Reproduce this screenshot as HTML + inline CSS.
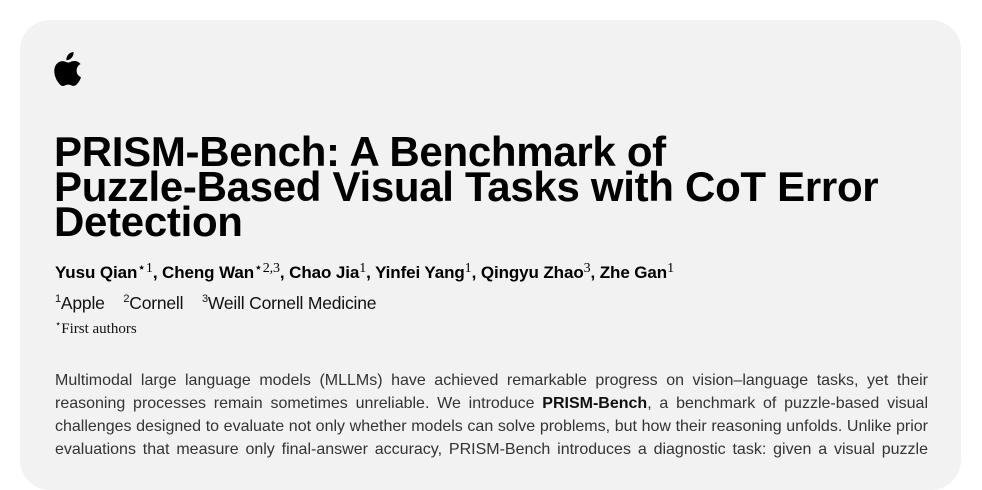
<!DOCTYPE html>
<html><head><meta charset="utf-8"><style>
html,body{margin:0;padding:0;background:#fff;width:982px;height:456px;overflow:hidden}
.card{position:absolute;left:20px;top:20px;width:941px;height:470px;background:#f2f2f2;border-radius:30px}
.logo{position:absolute;left:53px;top:52px}
h1{position:absolute;left:54px;top:134px;margin:0;font:bold 42px/35px "Liberation Sans",sans-serif;letter-spacing:-0.3px;color:#000;width:920px}
.auth{position:absolute;left:55px;top:260px;font:bold 17px "Liberation Sans",sans-serif;color:#000;letter-spacing:-0.1px}
.auth sup{font:14px "Liberation Serif",serif;vertical-align:6px}
.aff{position:absolute;left:55px;top:293px;font:17.5px "Liberation Sans",sans-serif;color:#111;letter-spacing:-0.2px}
.aff sup{font:11px "Liberation Sans",sans-serif;vertical-align:7px}
.first{position:absolute;left:55px;top:319px;font:15px "Liberation Serif",serif;color:#111}
.first sup{font-size:10px}
.body{position:absolute;left:55px;top:369px;width:873px;font:16px/23px "Liberation Sans",sans-serif;color:#333}
.body div{text-align:justify;text-align-last:justify;white-space:nowrap}
</style></head><body>
<div class="card"></div>
<svg class="logo" width="30" height="36" viewBox="0 0 30 36"><path d="M20.5 0c.3 2.2-.6 4.3-1.9 5.8-1.3 1.5-3.2 2.5-5.2 2.4-.3-2.1.7-4.3 1.9-5.7C16.6 1 18.7.1 20.5 0zM27.2 12.3c-.2.1-3.6 2.1-3.6 6.3 0 4.9 4.3 6.6 4.4 6.6 0 .1-.7 2.4-2.3 4.7-1.4 2-2.8 4-5 4-2.2 0-2.9-1.3-5.4-1.3-2.5 0-3.3 1.3-5.3 1.4-2.1.1-3.8-2.2-5.2-4.2C2 26-.3 18.5 2.7 13.3c1.5-2.6 4.2-4.2 7-4.2 2.2 0 4.2 1.5 5.5 1.5 1.3 0 3.8-1.8 6.4-1.6 1.1 0 4.1.4 6.1 3.3z" fill="#000"/></svg>
<h1>PRISM-Bench: A Benchmark of<br>Puzzle-Based Visual Tasks with CoT Error<br>Detection</h1>
<div class="auth">Yusu Qian<sup>⋆1</sup>, Cheng Wan<sup>⋆2,3</sup>, Chao Jia<sup>1</sup>, Yinfei Yang<sup>1</sup>, Qingyu Zhao<sup>3</sup>, Zhe Gan<sup>1</sup></div>
<div class="aff"><sup>1</sup>Apple &nbsp;&nbsp;&nbsp;<sup>2</sup>Cornell &nbsp;&nbsp;&nbsp;<sup>3</sup>Weill Cornell Medicine</div>
<div class="first"><sup>⋆</sup>First authors</div>
<div class="body">
<div>Multimodal large language models (MLLMs) have achieved remarkable progress on vision–language tasks, yet their</div>
<div>reasoning processes remain sometimes unreliable. We introduce <b style="color:#111">PRISM-Bench</b>, a benchmark of puzzle-based visual</div>
<div>challenges designed to evaluate not only whether models can solve problems, but how their reasoning unfolds. Unlike prior</div>
<div>evaluations that measure only final-answer accuracy, PRISM-Bench introduces a diagnostic task: given a visual puzzle</div>
</div>
</body></html>
